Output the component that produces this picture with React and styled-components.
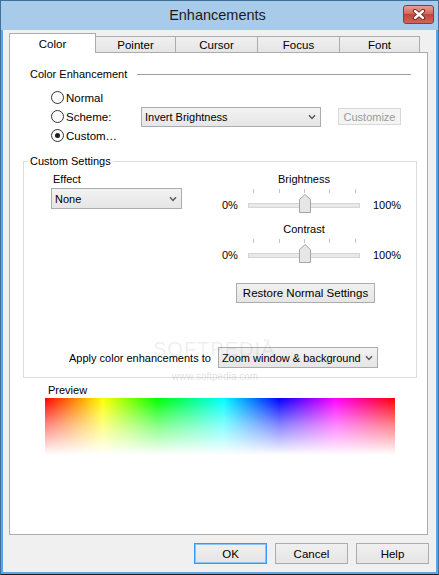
import React from 'react';
import styled, { createGlobalStyle } from 'styled-components';

const GlobalStyle = createGlobalStyle`
  html, body { margin: 0; padding: 0; background: #ffffff; }
  body { font-family: "Liberation Sans", Arial, sans-serif; font-size: 11px; color: #000; }
  * { box-sizing: border-box; }
`;

const Window = styled.div`
  position: relative;
  width: 439px;
  height: 575px;
  border: 1px solid #3f6f9b;
  border-bottom-color: #1c1c1c;
  background: #5aa6e8;
  display: flex;
  flex-direction: column;
  font-family: "Liberation Sans", Arial, sans-serif;
  font-size: 11px;
  color: #000;
`;

const TitleBar = styled.div`
  height: 29px;
  flex: none;
  background: #a9cbea;
  display: grid;
  grid-template-columns: 1fr auto 1fr;
  align-items: start;
  padding-right: 4px;
`;

const Title = styled.div`
  grid-column: 2;
  line-height: 29px;
  font-size: 14.5px;
  color: #1b1b1b;
`;

const CloseButton = styled.div`
  grid-column: 3;
  justify-self: end;
  margin-top: 4px;
  width: 31px;
  height: 19px;
  border: 1px solid #8c3a33;
  border-radius: 3px;
  background: linear-gradient(#e5a095 0%, #d3685c 45%, #c2463b 50%, #cf6458 100%);
  display: flex;
  align-items: center;
  justify-content: center;
`;

const Client = styled.div`
  flex: 1;
  margin: 0 2px 2px 2px;
  background: #f0f0f0;
  padding: 3px 7px 8px 0;
  display: flex;
  flex-direction: column;
`;

const TabStrip = styled.div`
  height: 19px;
  margin-left: 6px;
  display: flex;
  align-items: flex-end;
  position: relative;
  z-index: 1;
`;

const Tab = styled.div`
  width: ${p => p.$w}px;
  height: ${p => (p.$active ? 20 : 16)}px;
  margin-bottom: ${p => (p.$active ? -1 : 0)}px;
  margin-left: ${p => (p.$first ? 0 : -1)}px;
  border: 1px solid #acacac;
  border-bottom: none;
  background: ${p => (p.$active ? '#ffffff' : 'linear-gradient(#f0f0f0, #e5e5e5)')};
  position: relative;
  z-index: ${p => (p.$active ? 2 : 1)};
  display: flex;
  align-items: center;
  justify-content: center;
  font-size: 11.5px;
`;

const Panel = styled.div`
  margin-left: 6px;
  width: 419px;
  height: 483px;
  background: #ffffff;
  border: 1px solid #acacac;
  padding: 13px 10px 0 13px;
  display: flex;
  flex-direction: column;
`;

const SectionHeader = styled.div`
  height: 16px;
  display: flex;
  align-items: center;
  padding-left: 7px;
  padding-right: 6px;
`;

const HeaderLine = styled.div`
  flex: 1;
  height: 1px;
  margin-left: 10px;
  background: #a0a0a0;
`;

const RadioGroup = styled.div`
  margin-top: 6px;
  margin-left: 28px;
  display: flex;
  flex-direction: column;
`;

const RadioRow = styled.div`
  height: 19px;
  display: flex;
  align-items: center;
`;

const RadioLabel = styled.label`
  width: 90px;
  display: flex;
  align-items: center;
  gap: 2px;
  font-size: 11.5px;
`;

const RadioCircle = styled.span`
  width: 13px;
  height: 13px;
  border-radius: 50%;
  border: 1px solid #333333;
  background: #fcfcfc;
  display: flex;
  align-items: center;
  justify-content: center;
  &::after {
    content: '';
    display: ${p => (p.$checked ? 'block' : 'none')};
    width: 5px;
    height: 5px;
    border-radius: 50%;
    background: #1e1e1e;
  }
`;

const Select = styled.div`
  flex: none;
  width: ${p => p.$w}px;
  height: ${p => p.$h || 20}px;
  border: 1px solid #acacac;
  background: linear-gradient(#f2f2f2, #e6e6e6);
  display: flex;
  align-items: center;
  justify-content: space-between;
  padding: 0 4px 0 3px;
  white-space: nowrap;
  overflow: hidden;
`;

const Button = styled.div`
  flex: none;
  width: ${p => p.$w}px;
  height: ${p => p.$h || 21}px;
  border: 1px solid ${p => (p.$disabled ? '#d9d9d9' : p.$default ? '#3399ff' : '#acacac')};
  box-shadow: ${p => (p.$default ? 'inset 0 0 0 1px #8cc4f5' : 'none')};
  background: ${p => (p.$disabled ? '#f4f4f4' : 'linear-gradient(#f0f0f0, #e5e5e5)')};
  color: ${p => (p.$disabled ? '#9a9a9a' : '#000')};
  display: flex;
  align-items: center;
  justify-content: center;
  margin-left: ${p => p.$ml || 0}px;
  margin-top: ${p => p.$mt || 0}px;
  font-size: ${p => (p.$big ? 11.5 : 11)}px;
`;

const GroupBox = styled.fieldset`
  margin: 8px 0 0 0;
  padding: 2px 0 9px 0;
  border: 1px solid #dcdcdc;
  min-width: 0;
`;

const Legend = styled.legend`
  margin-left: 4px;
  padding: 0 2px;
  line-height: 16px;
`;

const GroupTop = styled.div`
  display: flex;
  padding-left: 27px;
`;

const LeftCol = styled.div`
  width: 131px;
  display: flex;
  flex-direction: column;
`;

const FieldLabel = styled.div`
  height: 16px;
  line-height: 16px;
  padding-left: 2px;
  margin-bottom: 1px;
`;

const RightCol = styled.div`
  margin-left: 40px;
  display: flex;
  flex-direction: column;
`;

const SliderTitle = styled.div`
  margin-left: 26px;
  width: 112px;
  height: 16px;
  line-height: 16px;
  text-align: center;
`;

const SliderRow = styled.div`
  display: flex;
  height: 34px;
`;

const PctLabel = styled.div`
  width: ${p => p.$w || 'auto'};
  margin-left: ${p => p.$ml || 0}px;
  margin-top: 10px;
  line-height: 16px;
`;

const TrackArea = styled.div`
  position: relative;
  width: 112px;
  height: 34px;
`;

const Track = styled.div`
  position: absolute;
  left: 0;
  right: 0;
  top: 16px;
  height: 5px;
  background: #e7eaea;
  border: 1px solid #d6d6d6;
`;

const Tick = styled.div`
  position: absolute;
  top: 2px;
  left: ${p => p.$x}px;
  width: 1px;
  height: 4px;
  background: #c4c4c4;
`;

const Thumb = styled.svg`
  position: absolute;
  top: 7px;
  left: ${p => p.$x}px;
`;

const ApplyRow = styled.div`
  margin-top: 44px;
  padding-left: 45px;
  display: flex;
  align-items: center;
  gap: 7px;
`;

const PreviewLabel = styled.div`
  margin-top: 4px;
  margin-left: 25px;
  line-height: 16px;
`;

const Spectrum = styled.div`
  margin-left: 22px;
  width: 350px;
  height: 57px;
  background:
    linear-gradient(to bottom, rgba(255,255,255,0) 0%, rgba(255,255,255,0.5) 45%, #ffffff 100%),
    linear-gradient(to right, #ff0000 0%, #ffff00 16.5%, #00ff00 32%, #00ffff 51%, #0000ff 67%, #ff00ff 83%, #ff0000 100%);
`;

const ButtonRow = styled.div`
  margin-top: 8px;
  display: flex;
  justify-content: flex-end;
  gap: 8px;
`;

const Watermark = styled.div`
  position: absolute;
  left: ${p => p.$x}px;
  top: ${p => p.$y}px;
  font-size: ${p => p.$size}px;
  line-height: 1;
  letter-spacing: ${p => p.$ls || 0}px;
  color: rgba(120, 120, 120, ${p => p.$a});
  pointer-events: none;
  white-space: nowrap;
`;

const Chevron = () => (
  <svg width="8" height="6" viewBox="0 0 8 6">
    <path d="M1 1.2 L4 4.4 L7 1.2" fill="none" stroke="#5a5a5a" strokeWidth="1.5" />
  </svg>
);

const Radio = ({ checked, children }) => (
  <RadioLabel>
    <RadioCircle $checked={checked} />
    <span>{children}</span>
  </RadioLabel>
);

const ticks = [5, 31, 56, 81, 107];

const Slider = ({ title, pos }) => (
  <div>
    <SliderTitle>{title}</SliderTitle>
    <SliderRow>
      <PctLabel $w="26px">0%</PctLabel>
      <TrackArea>
        {ticks.map(t => <Tick key={t} $x={t} />)}
        <Track />
        <Thumb $x={pos} width="12" height="19" viewBox="0 0 12 19">
          <path d="M0.5 5.5 L6 0.5 L11.5 5.5 V18.5 H0.5 Z" fill="#e6e6e6" stroke="#a5a5a5" />
        </Thumb>
      </TrackArea>
      <PctLabel $ml={13}>100%</PctLabel>
    </SliderRow>
  </div>
);

const tabs = [
  { label: 'Color', w: 87 },
  { label: 'Pointer', w: 81 },
  { label: 'Cursor', w: 83 },
  { label: 'Focus', w: 83 },
  { label: 'Font', w: 81 },
];

export default function App() {
  return (
    <>
      <GlobalStyle />
      <Window>
        <TitleBar>
          <Title>Enhancements</Title>
          <CloseButton>
            <svg width="14" height="11" viewBox="0 0 14 11">
              <path d="M3 2 L11 9 M11 2 L3 9" stroke="#6b2119" strokeWidth="4.2" strokeLinecap="round" />
              <path d="M3 2 L11 9 M11 2 L3 9" stroke="#ffffff" strokeWidth="2.4" strokeLinecap="round" />
            </svg>
          </CloseButton>
        </TitleBar>
        <Client>
          <TabStrip>
            {tabs.map((t, i) => (
              <Tab key={t.label} $w={t.w} $active={i === 0} $first={i === 0}>
                {t.label}
              </Tab>
            ))}
          </TabStrip>
          <Panel>
            <SectionHeader>
              <span>Color Enhancement</span>
              <HeaderLine />
            </SectionHeader>
            <RadioGroup>
              <RadioRow>
                <Radio>Normal</Radio>
              </RadioRow>
              <RadioRow>
                <Radio>Scheme:</Radio>
                <Select $w={180}>
                  <span>Invert Brightness</span>
                  <Chevron />
                </Select>
                <Button $w={63} $h={17} $ml={17} $disabled>Customize</Button>
              </RadioRow>
              <RadioRow>
                <Radio checked>Custom…</Radio>
              </RadioRow>
            </RadioGroup>
            <GroupBox>
              <Legend>Custom Settings</Legend>
              <GroupTop>
                <LeftCol>
                  <FieldLabel>Effect</FieldLabel>
                  <Select $w={131} $h={21}>
                    <span>None</span>
                    <Chevron />
                  </Select>
                </LeftCol>
                <RightCol>
                  <Slider title="Brightness" pos={51} />
                  <Slider title="Contrast" pos={51} />
                  <Button $w={139} $h={20} $ml={14} $mt={12} $big>Restore Normal Settings</Button>
                </RightCol>
              </GroupTop>
              <ApplyRow>
                <span>Apply color enhancements to</span>
                <Select $w={160} $h={21}>
                  <span>Zoom window &amp; background</span>
                  <Chevron />
                </Select>
              </ApplyRow>
            </GroupBox>
            <PreviewLabel>Preview</PreviewLabel>
            <Spectrum />
          </Panel>
          <ButtonRow>
            <Button $w={73} $default $big>OK</Button>
            <Button $w={73} $big>Cancel</Button>
            <Button $w={73} $big>Help</Button>
          </ButtonRow>
        </Client>
        <Watermark $x={152} $y={338} $size={20} $ls={1} $a={0.12}>SOFTPEDIA</Watermark>
        <Watermark $x={262} $y={337} $size={7} $a={0.2}>™</Watermark>
        <Watermark $x={171} $y={371} $size={10} $a={0.22}>www.softpedia.com</Watermark>
      </Window>
    </>
  );
}
